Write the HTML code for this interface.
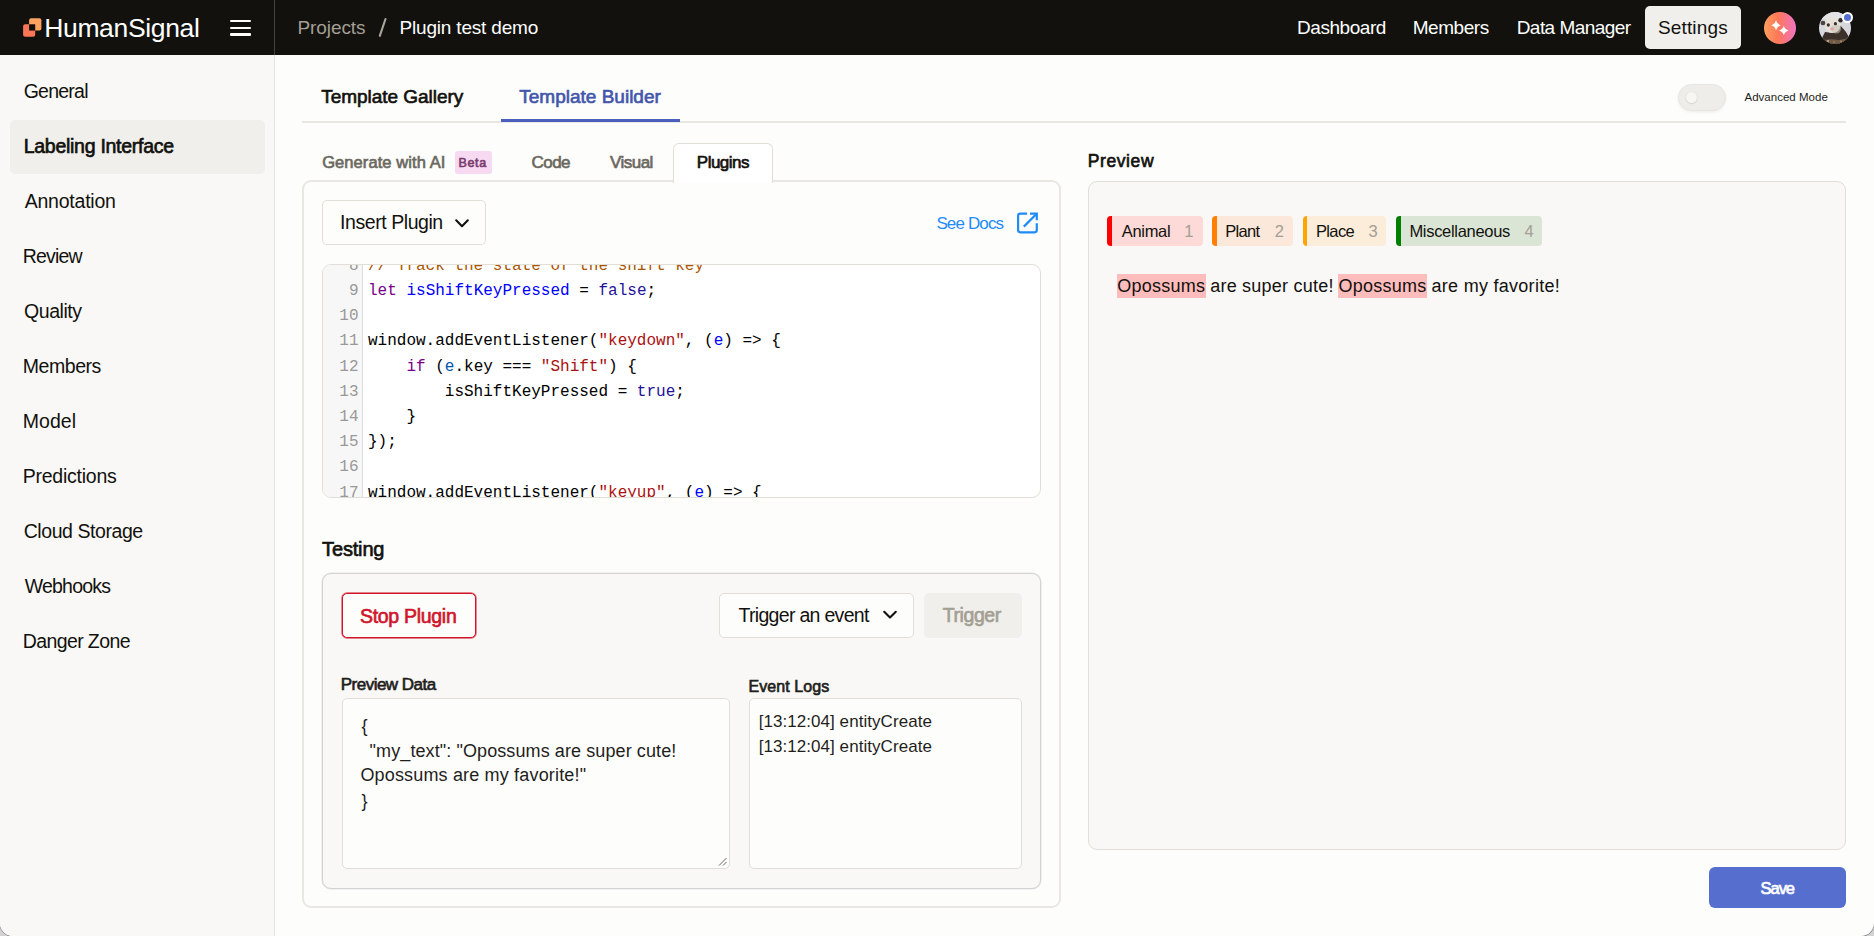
<!DOCTYPE html>
<html><head><meta charset="utf-8"><title>Labeling Interface</title>
<style>
html,body{margin:0;padding:0;}
body{width:1874px;height:936px;overflow:hidden;background:#d3d3d3;font-family:"Liberation Sans",sans-serif;}
#root{position:absolute;left:0;top:0;width:1874px;height:936px;background:#fdfdfc;overflow:hidden;border-radius:0 0 13px 13px;box-shadow:0 0 0 0.7px rgba(60,60,60,0.55);}
.a{position:absolute;box-sizing:border-box;}
.t{position:absolute;white-space:pre;line-height:30px;font-family:"Liberation Sans",sans-serif;}
.cl{position:absolute;left:0;height:25.2px;line-height:25.2px;white-space:pre;font-family:"Liberation Mono",monospace;font-size:16px;color:#000;}
.ln{position:absolute;left:0;width:35.5px;text-align:right;color:#999;}
.cx{position:absolute;left:45px;}
</style></head>
<body>
<div id="root">
<!-- header -->
<div class="a" style="left:0;top:0;width:1874px;height:55px;background:#12110d;"></div>
<div class="a" style="left:274px;top:0;width:1px;height:55px;background:#45433e;"></div>
<svg class="a" style="left:22px;top:17px" width="21" height="21" viewBox="0 0 21 21">
 <rect x="7.1" y="1.3" width="12.3" height="12.3" rx="2" fill="#fda35f"/>
 <rect x="1.1" y="7.3" width="12.1" height="12.5" rx="2" fill="#ff7557"/>
 <rect x="7.1" y="7.3" width="6.1" height="6.3" fill="#12110d"/>
</svg>
<div class="a" style="left:230px;top:19.6px;width:21px;height:2.5px;background:#fff;border-radius:1px"></div>
<div class="a" style="left:230px;top:26.5px;width:21px;height:2.5px;background:#fff;border-radius:1px"></div>
<div class="a" style="left:230px;top:33.4px;width:21px;height:2.5px;background:#fff;border-radius:1px"></div>
<div class="a" style="left:1645px;top:6px;width:96px;height:43px;background:#f0efeb;border-radius:5px"></div>
<div class="a" style="left:1764px;top:11.7px;width:32px;height:32px;border-radius:50%;background:linear-gradient(90deg,#ff9f5c 0%,#ff7759 45%,#ee74c4 100%)"></div>
<svg class="a" style="left:1764px;top:11.7px" width="32" height="32" viewBox="0 0 32 32">
 <path d="M12 8.200000000000001 Q13.06 12.18 16.8 13.3 Q13.06 14.42 12 18.4 Q10.94 14.42 7.2 13.3 Q10.94 12.18 12 8.200000000000001Z" fill="#fff"/>
<path d="M19.8 13.7 Q20.86 17.44 24.6 18.5 Q20.86 19.56 19.8 23.3 Q18.74 19.56 15.0 18.5 Q18.74 17.44 19.8 13.7Z" fill="#fff"/>
</svg>
<svg class="a" style="left:1819px;top:11.6px" width="32" height="32" viewBox="0 0 32 32">
 <defs><clipPath id="avc"><circle cx="16" cy="16" r="16"/></clipPath></defs>
 <g clip-path="url(#avc)">
  <rect x="0" y="0" width="32" height="32" fill="#d6d7dc"/>
  <rect x="0" y="0" width="32" height="7" fill="#e2e3e7"/>
  <path d="M3 26 L6 20 L14 21 L21 13 L27 20 L31 27 L32 32 L0 32 Z" fill="#3b302a"/>
  <ellipse cx="13.6" cy="13" rx="8.2" ry="8" fill="#e6e2da"/>
  <ellipse cx="17" cy="17" rx="5" ry="4.5" fill="#c9c2b8" opacity="0.6"/>
  <ellipse cx="4" cy="11" rx="2.4" ry="2.3" fill="#4b4443"/>
  <ellipse cx="21.5" cy="8.3" rx="2.2" ry="2.2" fill="#2e2826"/>
  <ellipse cx="9.3" cy="13" rx="1.6" ry="1.7" fill="#3a302c"/>
  <ellipse cx="16.4" cy="11.7" rx="1.6" ry="1.6" fill="#3a302c"/>
  <ellipse cx="13.1" cy="16.8" rx="1.9" ry="1.6" fill="#e0a3a8"/>
  <path d="M0 29 Q10 26 20 28 Q27 27 32 25 L32 32 L0 32 Z" fill="#6f5a45"/>
  <circle cx="9" cy="29" r="1" fill="#c9b9a5"/><circle cx="15" cy="30" r="0.8" fill="#a89176"/><circle cx="22" cy="29.5" r="0.9" fill="#a89176"/>
 </g>
</svg>
<div class="a" style="left:1841.9px;top:11.6px;width:11.2px;height:11.2px;border-radius:50%;background:#fff"></div>
<div class="a" style="left:1844px;top:13.7px;width:7px;height:7px;border-radius:50%;background:#5670d0"></div>

<svg class="a" style="left:374px;top:14px" width="18" height="28" viewBox="0 0 18 28"><path d="M11.5 5 L5.8 21.8" stroke="#aaa59b" stroke-width="2.1" stroke-linecap="round"/></svg>
<!-- sidebar -->
<div class="a" style="left:0;top:55px;width:274px;height:881px;background:#f9f8f6;"></div>
<div class="a" style="left:274px;top:55px;width:1px;height:881px;background:#e6e3dc;"></div>
<div class="a" style="left:9.5px;top:119.5px;width:255px;height:54.5px;background:#f0efeb;border-radius:5px"></div>

<!-- top tabs -->
<div class="a" style="left:302px;top:121px;width:1544px;height:2px;background:#e9e7e1;"></div>
<div class="a" style="left:500.5px;top:119px;width:179px;height:2.7px;background:#4c5fbd;"></div>
<div class="a" style="left:1678px;top:83.7px;width:48px;height:27px;border-radius:14px;background:#eeedea;border:1px solid #e6e5e1;box-shadow:0 1.5px 3px rgba(0,0,0,0.06)"></div>
<div class="a" style="left:1686.4px;top:92.2px;width:10.4px;height:10.4px;border-radius:50%;background:#f7f6f3;box-shadow:0 0.5px 1.5px rgba(0,0,0,0.18)"></div>

<!-- left panel -->
<div class="a" style="left:302px;top:180px;width:759px;height:728px;border:2px solid #e9e7e2;border-radius:9px;background:#fdfdfc;"></div>
<div class="a" style="left:673px;top:143px;width:100px;height:39.5px;border:1px solid #e1ded5;border-bottom:none;border-radius:6px 6px 0 0;background:#ffffff;"></div>
<div class="a" style="left:454.8px;top:151.2px;width:37.2px;height:22.5px;border-radius:3px;background:#f8d9f2;"></div>

<div class="a" style="left:322px;top:200px;width:164px;height:45.3px;border:1px solid #e1ded5;border-radius:5px;background:#fdfdfc;"></div>
<svg class="a" style="left:454px;top:216.6px" width="16" height="12" viewBox="0 0 16 12"><path d="M2.2 3.3 L8 9.2 L13.8 3.3" fill="none" stroke="#12110d" stroke-width="2.1" stroke-linecap="round" stroke-linejoin="round"/></svg>
<svg class="a" style="left:1016px;top:211.5px" width="23" height="22" viewBox="0 0 23 22">
 <path d="M11.1 1.6 H4.3 Q2.1 1.6 2.1 3.8 V18.1 Q2.1 20.3 4.3 20.3 H18.6 Q20.8 20.3 20.8 18.1 V11.3" fill="none" stroke="#1f8bf5" stroke-width="2.2"/>
 <path d="M14 1.6 H20.8 V8.2" fill="none" stroke="#1f8bf5" stroke-width="2.2"/>
 <path d="M20.2 2.2 L7.8 14.6" fill="none" stroke="#1f8bf5" stroke-width="2.2"/>
</svg>

<!-- code editor -->
<div class="a" style="left:322px;top:264px;width:719px;height:233.5px;border:1px solid #e1ded5;border-radius:9px;background:#ffffff;overflow:hidden;">
 <div class="a" style="left:0;top:0;width:40px;height:240px;background:#f7f7f7;border-right:1px solid #dddddd;"></div>
<div class="cl" style="top:-11.20px"><span class="ln">8</span><span class="cx"><span style="color:#aa5500">// Track the state of the shift key</span></span></div>
<div class="cl" style="top:14.00px"><span class="ln">9</span><span class="cx"><span style="color:#770088">let</span> <span style="color:#0000ff">isShiftKeyPressed</span> = <span style="color:#221199">false</span>;</span></div>
<div class="cl" style="top:39.20px"><span class="ln">10</span><span class="cx"></span></div>
<div class="cl" style="top:64.40px"><span class="ln">11</span><span class="cx">window.addEventListener(<span style="color:#aa1111">&quot;keydown&quot;</span>, (<span style="color:#0000ff">e</span>) =&gt; {</span></div>
<div class="cl" style="top:89.60px"><span class="ln">12</span><span class="cx">    <span style="color:#770088">if</span> (<span style="color:#0055aa">e</span>.key === <span style="color:#aa1111">&quot;Shift&quot;</span>) {</span></div>
<div class="cl" style="top:114.80px"><span class="ln">13</span><span class="cx">        isShiftKeyPressed = <span style="color:#221199">true</span>;</span></div>
<div class="cl" style="top:140.00px"><span class="ln">14</span><span class="cx">    }</span></div>
<div class="cl" style="top:165.20px"><span class="ln">15</span><span class="cx">});</span></div>
<div class="cl" style="top:190.40px"><span class="ln">16</span><span class="cx"></span></div>
<div class="cl" style="top:215.60px"><span class="ln">17</span><span class="cx">window.addEventListener(<span style="color:#aa1111">&quot;keyup&quot;</span>, (<span style="color:#0000ff">e</span>) =&gt; {</span></div>
</div>

<!-- testing -->
<div class="a" style="left:322px;top:573px;width:719px;height:316px;border:1px solid #d3d3d3;box-shadow:0 0 0 0.6px rgba(215,215,215,0.6);border-radius:9px;background:#f9f8f6;"></div>
<div class="a" style="left:341.5px;top:592.8px;width:134px;height:45.2px;border:1px solid #d0152b;box-shadow:0 0 0 0.7px rgba(214,40,56,0.75);border-radius:5px;background:#fdfdfc;"></div>
<div class="a" style="left:719.3px;top:593.3px;width:194.3px;height:44.4px;border:1px solid #e1ded5;border-radius:5px;background:#fdfdfc;"></div>
<svg class="a" style="left:882px;top:608px" width="16" height="14" viewBox="0 0 16 14"><path d="M2.2 3.8 L8 9.6 L13.8 3.8" fill="none" stroke="#12110d" stroke-width="2.1" stroke-linecap="round" stroke-linejoin="round"/></svg>
<div class="a" style="left:923.5px;top:593.3px;width:98px;height:44.4px;border-radius:5px;background:#f0efeb;"></div>
<div class="a" style="left:342px;top:698.4px;width:388px;height:170.3px;border:1px solid #e1ded5;border-radius:5px;background:#fdfdfc;"></div>
<svg class="a" style="left:716px;top:855px" width="12" height="12" viewBox="0 0 12 12"><path d="M10.5 3 L3 10.5 M10.5 7 L7 10.5" stroke="#6b6860" stroke-width="1" fill="none"/></svg>
<div class="a" style="left:749.2px;top:698.4px;width:272.5px;height:170.3px;border:1px solid #e1ded5;border-radius:5px;background:#fdfdfc;"></div>

<!-- preview -->
<div class="a" style="left:1088.2px;top:181px;width:757.7px;height:668.5px;border:1px solid #e1ded5;border-radius:9px;background:#f9f8f6;"></div>
<div class="a" style="left:1107.2px;top:216.3px;width:95.4px;height:29.5px;border-radius:4px;background:#fdd9d7;overflow:hidden"><div class="a" style="left:0;top:0;width:4.6px;height:100%;background:#ff0000"></div></div>
<div class="a" style="left:1212px;top:216.3px;width:81.4px;height:29.5px;border-radius:4px;background:#fbe8da;overflow:hidden"><div class="a" style="left:0;top:0;width:4.6px;height:100%;background:#ff8000"></div></div>
<div class="a" style="left:1302.8px;top:216.3px;width:83.7px;height:29.5px;border-radius:4px;background:#fcecda;overflow:hidden"><div class="a" style="left:0;top:0;width:4.6px;height:100%;background:#ffa500"></div></div>
<div class="a" style="left:1396.1px;top:216.3px;width:146px;height:29.5px;border-radius:4px;background:#dbe5d5;overflow:hidden"><div class="a" style="left:0;top:0;width:4.6px;height:100%;background:#008000"></div></div>
<div class="a" style="left:1116.8px;top:274.2px;width:89px;height:23.7px;background:#ffbcbc;"></div>
<div class="a" style="left:1338.1px;top:274.2px;width:89.2px;height:23.7px;background:#ffbcbc;"></div>

<div class="a" style="left:1709px;top:867.1px;width:137.1px;height:41.2px;border-radius:6px;background:#566fcf;"></div>

<div class="t" style="left:44.2px;top:12.6px;font-size:26.5px;letter-spacing:-0.34px;font-weight:400;color:#ffffff;">HumanSignal</div>
<div class="t" style="left:297.5px;top:13.0px;font-size:19.0px;letter-spacing:-0.086px;font-weight:400;color:#a49f95;">Projects</div>
<div class="t" style="left:399.5px;top:13.0px;font-size:19.0px;letter-spacing:-0.186px;font-weight:400;color:#ffffff;">Plugin test demo</div>
<div class="t" style="left:1297.0px;top:13.0px;font-size:19.0px;letter-spacing:-0.45px;font-weight:400;color:#ffffff;">Dashboard</div>
<div class="t" style="left:1412.7px;top:13.0px;font-size:19.0px;letter-spacing:-0.434px;font-weight:400;color:#ffffff;">Members</div>
<div class="t" style="left:1516.7px;top:13.0px;font-size:19.0px;letter-spacing:-0.545px;font-weight:400;color:#ffffff;">Data Manager</div>
<div class="t" style="left:1658.0px;top:13.0px;font-size:19.0px;letter-spacing:0.143px;font-weight:400;color:#12110d;">Settings</div>
<div class="t" style="left:23.7px;top:76.1px;font-size:19.5px;letter-spacing:-0.767px;font-weight:400;color:#12110d;">General</div>
<div class="t" style="left:23.7px;top:131.1px;font-size:19.5px;letter-spacing:-0.271px;font-weight:400;-webkit-text-stroke:0.65px #12110d;color:#12110d;">Labeling Interface</div>
<div class="t" style="left:24.7px;top:186.1px;font-size:19.5px;letter-spacing:-0.223px;font-weight:400;color:#12110d;">Annotation</div>
<div class="t" style="left:22.7px;top:241.1px;font-size:19.5px;letter-spacing:-0.8px;font-weight:400;color:#12110d;">Review</div>
<div class="t" style="left:24.0px;top:296.1px;font-size:19.5px;letter-spacing:-0.433px;font-weight:400;color:#12110d;">Quality</div>
<div class="t" style="left:22.7px;top:351.1px;font-size:19.5px;letter-spacing:-0.433px;font-weight:400;color:#12110d;">Members</div>
<div class="t" style="left:22.7px;top:406.1px;font-size:19.5px;letter-spacing:0.05px;font-weight:400;color:#12110d;">Model</div>
<div class="t" style="left:22.7px;top:461.1px;font-size:19.5px;letter-spacing:-0.24px;font-weight:400;color:#12110d;">Predictions</div>
<div class="t" style="left:23.7px;top:515.6px;font-size:19.5px;letter-spacing:-0.434px;font-weight:400;color:#12110d;">Cloud Storage</div>
<div class="t" style="left:24.7px;top:571.1px;font-size:19.5px;letter-spacing:-0.772px;font-weight:400;color:#12110d;">Webhooks</div>
<div class="t" style="left:22.7px;top:626.1px;font-size:19.5px;letter-spacing:-0.6px;font-weight:400;color:#12110d;">Danger Zone</div>
<div class="t" style="left:321.3px;top:81.7px;font-size:19.0px;letter-spacing:-0.04px;font-weight:400;-webkit-text-stroke:0.65px #12110d;color:#12110d;">Template Gallery</div>
<div class="t" style="left:519.3px;top:81.7px;font-size:19.0px;letter-spacing:0.0px;font-weight:400;-webkit-text-stroke:0.65px #4356ab;color:#4356ab;">Template Builder</div>
<div class="t" style="left:1744.5px;top:82.4px;font-size:11.5px;letter-spacing:0.016px;font-weight:400;color:#1f1e1b;">Advanced Mode</div>
<div class="t" style="left:322.2px;top:147.2px;font-size:16.5px;letter-spacing:0.08px;font-weight:400;-webkit-text-stroke:0.65px #6b6860;color:#6b6860;">Generate with AI</div>
<div class="t" style="left:458.5px;top:147.9px;font-size:12.5px;letter-spacing:0.666px;font-weight:400;-webkit-text-stroke:0.65px #7a3b6f;color:#7a3b6f;">Beta</div>
<div class="t" style="left:531.5px;top:148.4px;font-size:17.0px;letter-spacing:-0.534px;font-weight:400;-webkit-text-stroke:0.65px #6b6860;color:#6b6860;">Code</div>
<div class="t" style="left:610.0px;top:148.4px;font-size:17.0px;letter-spacing:-0.52px;font-weight:400;-webkit-text-stroke:0.65px #6b6860;color:#6b6860;">Visual</div>
<div class="t" style="left:696.8px;top:148.4px;font-size:17.0px;letter-spacing:-0.5px;font-weight:400;-webkit-text-stroke:0.65px #12110d;color:#12110d;">Plugins</div>
<div class="t" style="left:340.0px;top:207.3px;font-size:19.5px;letter-spacing:-0.433px;font-weight:400;color:#12110d;">Insert Plugin</div>
<div class="t" style="left:936.4px;top:208.9px;font-size:17px;letter-spacing:-0.857px;font-weight:400;color:#1f8bf5;">See Docs</div>
<div class="t" style="left:322.1px;top:533.9px;font-size:20.0px;letter-spacing:-0.167px;font-weight:400;-webkit-text-stroke:0.65px #12110d;color:#12110d;">Testing</div>
<div class="t" style="left:360.0px;top:600.7px;font-size:19.5px;letter-spacing:-0.3px;font-weight:400;-webkit-text-stroke:0.65px #d0152b;color:#d0152b;">Stop Plugin</div>
<div class="t" style="left:738.5px;top:600.3px;font-size:19.5px;letter-spacing:-0.694px;font-weight:400;color:#12110d;">Trigger an event</div>
<div class="t" style="left:942.8px;top:600.3px;font-size:19.5px;letter-spacing:-0.433px;font-weight:400;-webkit-text-stroke:0.65px #a49f95;color:#a49f95;">Trigger</div>
<div class="t" style="left:340.8px;top:670.3px;font-size:17.0px;letter-spacing:-0.527px;font-weight:400;-webkit-text-stroke:0.65px #1f1e1b;color:#1f1e1b;">Preview Data</div>
<div class="t" style="left:748.4px;top:672.4px;font-size:16.0px;letter-spacing:0.089px;font-weight:400;-webkit-text-stroke:0.65px #1f1e1b;color:#1f1e1b;">Event Logs</div>
<div class="t" style="left:361.4px;top:710.6px;font-size:18px;letter-spacing:0px;font-weight:400;color:#1f1e1b;">{</div>
<div class="t" style="left:369.6px;top:735.7px;font-size:18.0px;letter-spacing:0.097px;font-weight:400;color:#1f1e1b;">&quot;my_text&quot;: &quot;Opossums are super cute!</div>
<div class="t" style="left:360.4px;top:760.4px;font-size:18px;letter-spacing:0.168px;font-weight:400;color:#1f1e1b;">Opossums are my favorite!&quot;</div>
<div class="t" style="left:361.4px;top:785.5px;font-size:18px;letter-spacing:0px;font-weight:400;color:#1f1e1b;">}</div>
<div class="t" style="left:758.7px;top:706.8px;font-size:17.0px;letter-spacing:0.054px;font-weight:400;color:#1f1e1b;">[13:12:04] entityCreate</div>
<div class="t" style="left:758.7px;top:731.7px;font-size:17.0px;letter-spacing:0.054px;font-weight:400;color:#1f1e1b;">[13:12:04] entityCreate</div>
<div class="t" style="left:1087.7px;top:146.2px;font-size:17.5px;letter-spacing:0.6px;font-weight:400;-webkit-text-stroke:0.65px #12110d;color:#12110d;">Preview</div>
<div class="t" style="left:1121.8px;top:215.8px;font-size:16.5px;letter-spacing:-0.32px;font-weight:400;color:#12110d;">Animal</div>
<div class="t" style="left:1184.3px;top:215.8px;font-size:16.5px;letter-spacing:0px;font-weight:400;color:#a49f95;">1</div>
<div class="t" style="left:1225.2px;top:215.8px;font-size:16.5px;letter-spacing:-0.7px;font-weight:400;color:#12110d;">Plant</div>
<div class="t" style="left:1274.7px;top:215.8px;font-size:16.5px;letter-spacing:0px;font-weight:400;color:#a49f95;">2</div>
<div class="t" style="left:1316.0px;top:215.8px;font-size:16.5px;letter-spacing:-0.65px;font-weight:400;color:#12110d;">Place</div>
<div class="t" style="left:1368.6px;top:215.8px;font-size:16.5px;letter-spacing:0px;font-weight:400;color:#a49f95;">3</div>
<div class="t" style="left:1409.4px;top:215.8px;font-size:16.5px;letter-spacing:-0.3px;font-weight:400;color:#12110d;">Miscellaneous</div>
<div class="t" style="left:1524.5px;top:215.8px;font-size:16.5px;letter-spacing:0px;font-weight:400;color:#a49f95;">4</div>
<div class="t" style="left:1760.6px;top:873.0px;font-size:16.5px;letter-spacing:-1.067px;font-weight:400;-webkit-text-stroke:0.65px #ffffff;color:#ffffff;">Save</div>
<div class="t" style="left:1117.3px;top:271.2px;font-size:18.0px;letter-spacing:0.228px;font-weight:400;color:#12110d;">Opossums</div>
<div class="t" style="left:1210.2px;top:271.2px;font-size:18.0px;letter-spacing:0.229px;font-weight:400;color:#12110d;">are super cute!</div>
<div class="t" style="left:1338.6px;top:271.2px;font-size:18.0px;letter-spacing:0.228px;font-weight:400;color:#12110d;">Opossums</div>
<div class="t" style="left:1431.5px;top:271.2px;font-size:18.0px;letter-spacing:0.28px;font-weight:400;color:#12110d;">are my favorite!</div>

</div>
</body></html>
